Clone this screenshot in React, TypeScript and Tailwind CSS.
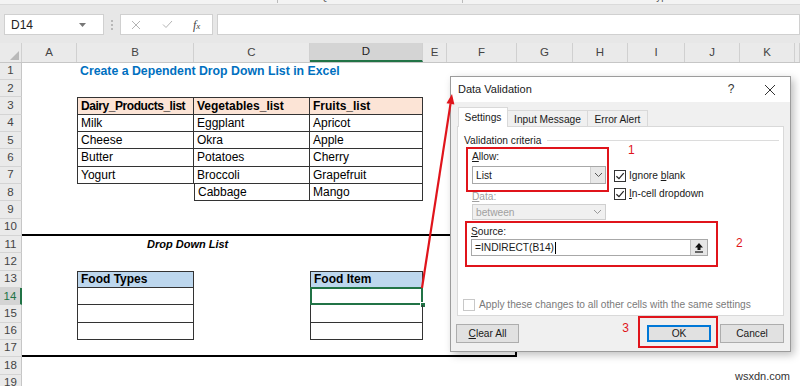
import React from 'react';

const COLS = ['A', 'B', 'C', 'D', 'E', 'F', 'G', 'H', 'I', 'J', 'K', 'L'];
const ROWS = Array.from({ length: 19 }, (_, i) => i + 1);
const GRID = 'grid grid-cols-[22px_55px_117px_116px_113px_24px_70px_56px_55px_57px_55px_55px_5px]';

const cells: Record<string, string> = {
  B3: 'Dairy_Products_list', C3: 'Vegetables_list', D3: 'Fruits_list',
  B4: 'Milk', C4: 'Eggplant', D4: 'Apricot',
  B5: 'Cheese', C5: 'Okra', D5: 'Apple',
  B6: 'Butter', C6: 'Potatoes', D6: 'Cherry',
  B7: 'Yogurt', C7: 'Broccoli', D7: 'Grapefruit',
  C8: 'Cabbage', D8: 'Mango',
  B13: 'Food Types', D13: 'Food Item',
};

const inTable1 = (c: string, r: number) =>
  (c === 'B' && r >= 3 && r <= 7) || ((c === 'C' || c === 'D') && r >= 3 && r <= 8);
const inTable2 = (c: string, r: number) => (c === 'B' || c === 'D') && r >= 13 && r <= 16;

const cellClass = (c: string, r: number) => {
  let cls = 'relative flex items-center px-[3px] whitespace-nowrap text-[12px] leading-none text-black';
  const t1 = inTable1(c, r);
  const t2 = inTable2(c, r);
  if (t1 || t2) cls += ' border-r border-b border-[#333]';
  if ((t1 && c === 'B') || (t1 && c === 'C' && r === 8) || t2) cls += ' border-l';
  if ((t1 && r === 3) || (t2 && r === 13)) cls += ' border-t';
  if (t1 && r === 3) cls += ' bg-[#fce4d6] font-bold text-[11px]';
  if (t1 && r === 3 && c === 'B') cls += ' tracking-[-0.45px]';
  if (t2 && r === 13) cls += ' bg-[#bdd7ee] font-bold text-[11px]';
  const thickCol = ['A', 'B', 'C', 'D', 'E', 'F'].includes(c);
  if ((r === 10 || r === 17) && thickCol) cls += ' border-b-2 border-b-black';
  if (c === 'F' && r >= 11 && r <= 17) cls += ' border-r-2 border-r-black';
  return cls;
};

const CheckBox = ({ checked, disabled }: { checked?: boolean; disabled?: boolean }) => (
  <span
    className={`flex w-[12px] h-[12px] items-center justify-center border bg-white ${
      disabled ? 'border-[#c8c8c8]' : 'border-[#333]'
    }`}
  >
    {checked && (
      <svg width="10" height="10" viewBox="0 0 10 10">
        <path d="M1.4 5.2 L4 7.7 L8.7 2.2" fill="none" stroke="#222" strokeWidth="1.2" />
      </svg>
    )}
  </span>
);

const Chevron = ({ color = '#555' }: { color?: string }) => (
  <svg width="9" height="6" viewBox="0 0 9 6">
    <path d="M1 1 L4.5 4.5 L8 1" fill="none" stroke={color} strokeWidth="1" />
  </svg>
);

const Dialog = () => (
  <div className="absolute left-[450px] top-[76px] w-[341px] h-[276px] flex flex-col border border-[#9c9c9c] bg-[#f0f0f0] shadow-[3px_3px_8px_rgba(0,0,0,0.25)] text-[10.2px] leading-[13px] text-[#1a1a1a]">
    <div className="h-[26px] bg-white flex items-center pl-[7px]">
      <span className="text-[11px]">Data Validation</span>
      <span className="ml-auto mr-[25px] w-[16px] text-center text-[12px] text-[#333]">?</span>
      <svg className="mr-[14px]" width="12" height="12" viewBox="0 0 12 12">
        <path d="M1 1 L11 11 M11 1 L1 11" stroke="#333" strokeWidth="1" />
      </svg>
    </div>

    <div className="flex-1 flex flex-col px-[6px] pt-[5px]">
      <div className="flex items-end h-[20px] ml-[1px]">
        <div className="relative z-10 w-[50px] h-[20px] flex items-center justify-center bg-white border border-b-0 border-[#d9d9d9]">
          Settings
        </div>
        <div className="w-[80px] h-[17px] flex items-center justify-center border border-l-0 border-b-0 border-[#d9d9d9]">
          Input Message
        </div>
        <div className="w-[60px] h-[17px] flex items-center justify-center border border-l-0 border-b-0 border-[#d9d9d9]">
          Error Alert
        </div>
      </div>

      <div className="-mt-[1px] h-[190px] flex flex-col border border-[#d9d9d9] bg-white">
        <div className="flex items-center pl-[6px] pr-[4px] pt-[7px]">
          <span>Validation criteria</span>
          <div className="flex-1 h-px bg-[#dcdcdc] ml-[6px]" />
        </div>

        <div className="flex items-start">
          <div className="relative z-10 ml-[8px] w-[143px] h-[45px] flex flex-col border-2 border-[#e0141b] pl-[4px] pt-[1px]">
            <span>
              <span className="underline">A</span>llow:
            </span>
            <div className="mt-[3px] w-[134px] h-[18px] flex border border-[#a8a8a8] bg-white">
              <span className="flex-1 flex items-center pl-[3px]">List</span>
              <span className="w-[15px] flex items-center justify-center bg-[#e8e8e8] border-l border-[#d0d0d0]">
                <Chevron />
              </span>
            </div>
          </div>
          <div className="ml-[5px] flex flex-col">
            <span className="-mt-[3px] pl-[14px] text-[12px] text-[#e0141b]">1</span>
            <div className="mt-[12px] flex items-center gap-[3px]">
              <CheckBox checked />
              <span>
                Ignore <span className="underline">b</span>lank
              </span>
            </div>
            <div className="mt-[5px] flex items-center gap-[3px]">
              <CheckBox checked />
              <span>
                <span className="underline">I</span>n-cell dropdown
              </span>
            </div>
          </div>
        </div>

        <span className="-mt-[10px] pl-[14px] text-[#a0a0a0]">
          <span className="underline">D</span>ata:
        </span>
        <div className="ml-[14px] mt-[1px] w-[134px] h-[16px] flex border border-[#cfcfcf] bg-[#f0f0f0] text-[#a0a0a0]">
          <span className="flex-1 flex items-center pl-[3px]">between</span>
          <span className="w-[15px] flex items-center justify-center">
            <Chevron color="#999" />
          </span>
        </div>

        <div className="flex items-center">
          <div className="ml-[7px] mt-[1px] w-[253px] h-[46px] flex flex-col border-2 border-[#e0141b] pl-[4px] pt-[2px]">
            <span>
              <span className="underline">S</span>ource:
            </span>
            <div className="mt-[1px] w-[237px] h-[17px] flex border border-[#a8a8a8] bg-white">
              <span className="flex-1 flex items-center pl-[3px]">
                =INDIRECT(B14)<span className="ml-[1px] w-px h-[12px] bg-black" />
              </span>
              <span className="w-[17px] flex items-center justify-center bg-[#e6e6e6] border-l border-[#c0c0c0]">
                <svg width="10" height="11" viewBox="0 0 10 11">
                  <path d="M5 1 L9 5.5 H6.5 V8 H3.5 V5.5 H1 Z" fill="#111" />
                  <path d="M1 10 H9" stroke="#111" strokeWidth="1.2" />
                </svg>
              </span>
            </div>
          </div>
          <span className="ml-[18px] text-[12px] text-[#e0141b]">2</span>
        </div>

        <div className="mt-[31px] ml-[5px] flex items-center gap-[4px] text-[#7a7a7a]">
          <CheckBox disabled />
          <span>Apply these changes to all other cells with the same settings</span>
        </div>
      </div>

      <div className="flex items-start h-[35px]">
        <div className="-ml-[1px] mt-[8px] w-[63px] h-[19px] flex items-center justify-center border border-[#adadad] bg-[#e1e1e1]">
          <span>
            <span className="underline">C</span>lear All
          </span>
        </div>
        <div className="flex-1" />
        <span className="mt-[6px] mr-[9px] text-[12px] text-[#e0141b]">3</span>
        <div className="w-[80px] h-[32px] border-2 border-[#e0141b] pl-[7px] pt-[7px]">
          <div className="w-[64px] h-[17px] flex items-center justify-center border-2 border-[#0078d7] bg-[#e1e1e1]">
            OK
          </div>
        </div>
        <div className="ml-[2px] mt-[8px] w-[64px] h-[19px] flex items-center justify-center border border-[#adadad] bg-[#e1e1e1]">
          Cancel
        </div>
      </div>
    </div>
  </div>
);

const App: React.FC = () => {
  return (
    <div className="relative w-[800px] h-[386px] overflow-hidden bg-white font-['Liberation_Sans',Arial,sans-serif]">
      {/* ribbon bottom edge */}
      <div className="h-[5px] overflow-hidden bg-[#f3f3f3] border-b border-[#dadada]">
        <div className="flex -mt-[9px] text-[10px] leading-[12px] text-[#555]">
          <div className="w-[278px] pl-[93px] border-r border-[#bbb]">Get &amp; Transform Data</div>
          <div className="w-[185px] pl-[42px] border-r border-[#bbb]">Queries &amp; Connections</div>
          <div className="pl-[164px]">Data Types</div>
        </div>
      </div>

      {/* formula bar */}
      <div className="h-[38px] bg-[#e7e7e7] flex items-start pt-[9px]">
        <div className="ml-[4px] w-[100px] h-[21px] flex items-center bg-white border border-[#d0d0d0] pl-[6px] text-[12px] text-[#222]">
          D14
          <svg className="ml-auto mr-[17px]" width="7" height="4" viewBox="0 0 7 4">
            <path d="M0 0 H7 L3.5 4 Z" fill="#777" />
          </svg>
        </div>
        <div className="w-[16px] h-[21px] flex flex-col items-center justify-center gap-[2px]">
          <span className="w-[2px] h-[2px] bg-[#b8b8b8]" />
          <span className="w-[2px] h-[2px] bg-[#b8b8b8]" />
          <span className="w-[2px] h-[2px] bg-[#b8b8b8]" />
        </div>
        <div className="w-[93px] h-[21px] flex items-center bg-white border border-[#d0d0d0]">
          <svg className="ml-[10px]" width="10" height="10" viewBox="0 0 10 10">
            <path d="M1 1 L9 9 M9 1 L1 9" stroke="#b4b4b4" strokeWidth="1" />
          </svg>
          <svg className="ml-[21px]" width="11" height="9" viewBox="0 0 11 9">
            <path d="M1 4.5 L4 7.5 L10 1" fill="none" stroke="#b4b4b4" strokeWidth="1" />
          </svg>
          <span className="ml-[20px] font-['Liberation_Serif',serif] italic text-[12px] text-[#444]">
            f<span className="text-[9px]">x</span>
          </span>
        </div>
        <div className="ml-[4px] flex-1 h-[21px] bg-white border border-[#d0d0d0]" />
      </div>

      {/* column headers */}
      <div className={`${GRID} h-[19.7px] bg-[#eaeaea] border-b border-[#c6c6c6] text-[11.5px] text-[#444]`}>
        <div className="flex items-end justify-end pr-[2px] pb-[2px] border-r border-[#d0d0d0]">
          <svg width="9" height="9" viewBox="0 0 9 9">
            <path d="M9 0 V9 H0 Z" fill="#b9b9b9" />
          </svg>
        </div>
        {COLS.map(c => (
          <div
            key={c}
            className={
              c === 'D'
                ? 'flex items-center justify-center border-r border-[#d0d0d0] bg-[#d4d4d4] border-b-2 border-b-[#217346] text-[#222]'
                : 'flex items-center justify-center border-r border-[#d0d0d0]'
            }
          >
            {c === 'L' ? '' : c}
          </div>
        ))}
      </div>

      {/* sheet */}
      <div className={`${GRID} auto-rows-[17.33px]`}>
        {ROWS.map(r => (
          <React.Fragment key={r}>
            <div
              className={
                r === 14
                  ? 'flex items-center justify-center bg-[#d4d4d4] border-b border-[#d4d4d4] border-r-2 border-r-[#217346] text-[11.5px] text-[#217346]'
                  : 'flex items-center justify-center bg-[#eaeaea] border-b border-[#d4d4d4] border-r border-r-[#c6c6c6] text-[11.5px] text-[#444]'
              }
            >
              {r}
            </div>
            {COLS.map(c => (
              <div key={c} className={cellClass(c, r)}>
                {r === 1 && c === 'B' && (
                  <span className="font-bold text-[12.3px] text-[#0070c0]">
                    Create a Dependent Drop Down List in Excel
                  </span>
                )}
                {r === 11 && c === 'B' && (
                  <span className="pl-[67px] font-bold italic text-[11px]">Drop Down List</span>
                )}
                {cells[`${c}${r}`]}
                {r === 14 && c === 'D' && (
                  <>
                    <div className="absolute -left-[1px] -top-[1px] -right-[1px] -bottom-[1px] border-2 border-[#217346]" />
                    <div className="absolute -right-[4px] -bottom-[4px] w-[6px] h-[6px] bg-[#217346] border border-white" />
                  </>
                )}
              </div>
            ))}
          </React.Fragment>
        ))}
      </div>

      <Dialog />

      {/* red pointer arrow */}
      <svg className="absolute left-0 top-0 pointer-events-none" width="800" height="386" viewBox="0 0 800 386">
        <line x1="422" y1="288" x2="450.5" y2="103.9" stroke="#e0141b" strokeWidth="2.2" />
        <polygon points="452,94 454.4,104.5 446.5,103.3" fill="#e0141b" />
      </svg>

      <span className="absolute right-[10px] bottom-[2px] text-[11px] text-[#333]">wsxdn.com</span>
    </div>
  );
};

export default App;
